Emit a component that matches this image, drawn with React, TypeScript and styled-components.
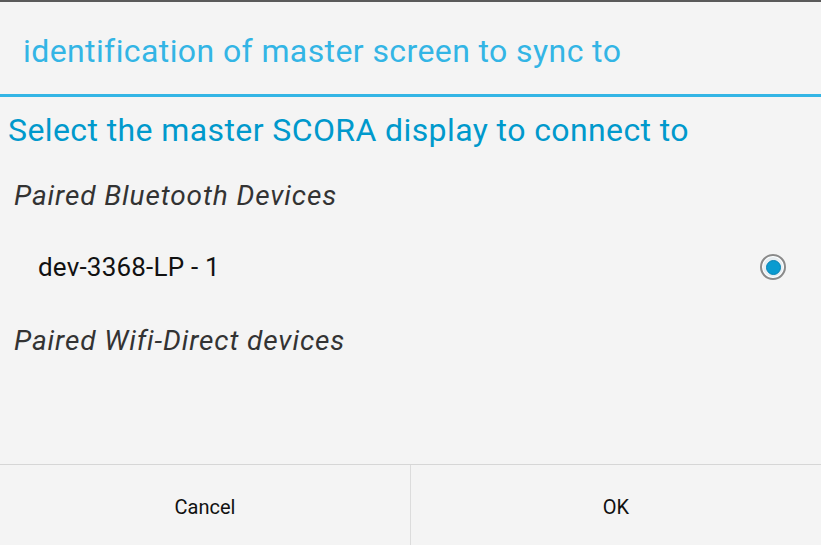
import styled, { createGlobalStyle } from 'styled-components';
import { useState } from 'react';

const GlobalStyle = createGlobalStyle`
    html, body {
        margin: 0;
        padding: 0;
        background: #f4f4f4;
    }
    body {
        font-family: Roboto, 'Noto Sans', sans-serif;
    }
`;

const Dialog = styled.div`
    display: flex;
    flex-direction: column;
    width: 821px;
    height: 545px;
    background: #f4f4f4;
    border-top: 2px solid #5a5a5a;
    box-sizing: border-box;
    overflow: hidden;
`;

const TitleBar = styled.div`
    height: 95px;
    box-sizing: border-box;
    padding: 33px 0 0 23px;
    border-bottom: 3px solid #33b5e5;
    color: #33b5e5;
    font-size: 32px;
    line-height: 32px;
    letter-spacing: 0.4px;
    white-space: nowrap;
`;

const Body = styled.div`
    display: flex;
    flex-direction: column;
    flex: 1;
`;

const Prompt = styled.div`
    padding: 17px 0 0 8px;
    color: #0099cc;
    font-size: 32px;
    line-height: 32px;
    letter-spacing: 0.4px;
    white-space: nowrap;
`;

const SectionHeader = styled.div<{ $gap: number }>`
    margin-top: ${({ $gap }) => $gap}px;
    padding-left: 14px;
    color: #333333;
    font-size: 28px;
    line-height: 28px;
    font-style: italic;
    letter-spacing: 0.9px;
`;

const DeviceRow = styled.label`
    display: flex;
    align-items: center;
    justify-content: space-between;
    margin-top: 16px;
    height: 82px;
    padding: 0 35px 0 38px;
    font-size: 26px;
    line-height: 26px;
    letter-spacing: 0.2px;
    color: #111111;
    cursor: pointer;
`;

const Radio = styled.span<{ checked: boolean }>`
    display: flex;
    align-items: center;
    justify-content: center;
    box-sizing: border-box;
    width: 26px;
    height: 26px;
    border-radius: 50%;
    border: 2px solid #8a8a8a;
    background: #e6eef2;
    box-shadow: inset 0 0 0 1px #ffffff;

    &::after {
        content: '';
        box-sizing: border-box;
        width: 15px;
        height: 15px;
        border-radius: 50%;
        border: 1px solid ${({ checked }) => (checked ? '#0782b4' : 'transparent')};
        background: ${({ checked }) => (checked ? '#0a9bd0' : 'transparent')};
    }
`;

const ButtonBar = styled.div`
    display: flex;
    margin-top: auto;
    height: 80px;
    border-top: 1px solid #d6d6d6;
`;

const Button = styled.button`
    flex: 1;
    background: transparent;
    border: none;
    font-family: Roboto, sans-serif;
    font-size: 20px;
    color: #111111;
    padding: 3px 0 0;

    & + & {
        border-left: 1px solid #dcdcdc;
    }
`;

const devices = ['dev-3368-LP - 1'];

const App = () => {
    const [selected, setSelected] = useState(0);

    return (
        <Dialog>
            <GlobalStyle />
            <TitleBar>identification of master screen to sync to</TitleBar>
            <Body>
                <Prompt>Select the master SCORA display to connect to</Prompt>
                <SectionHeader $gap={36}>Paired Bluetooth Devices</SectionHeader>
                {devices.map((name, i) => (
                    <DeviceRow key={name} onClick={() => setSelected(i)}>
                        {name}
                        <Radio checked={selected === i} />
                    </DeviceRow>
                ))}
                <SectionHeader $gap={19}>Paired Wifi-Direct devices</SectionHeader>
                <ButtonBar>
                    <Button>Cancel</Button>
                    <Button>OK</Button>
                </ButtonBar>
            </Body>
        </Dialog>
    );
};

export default App;
